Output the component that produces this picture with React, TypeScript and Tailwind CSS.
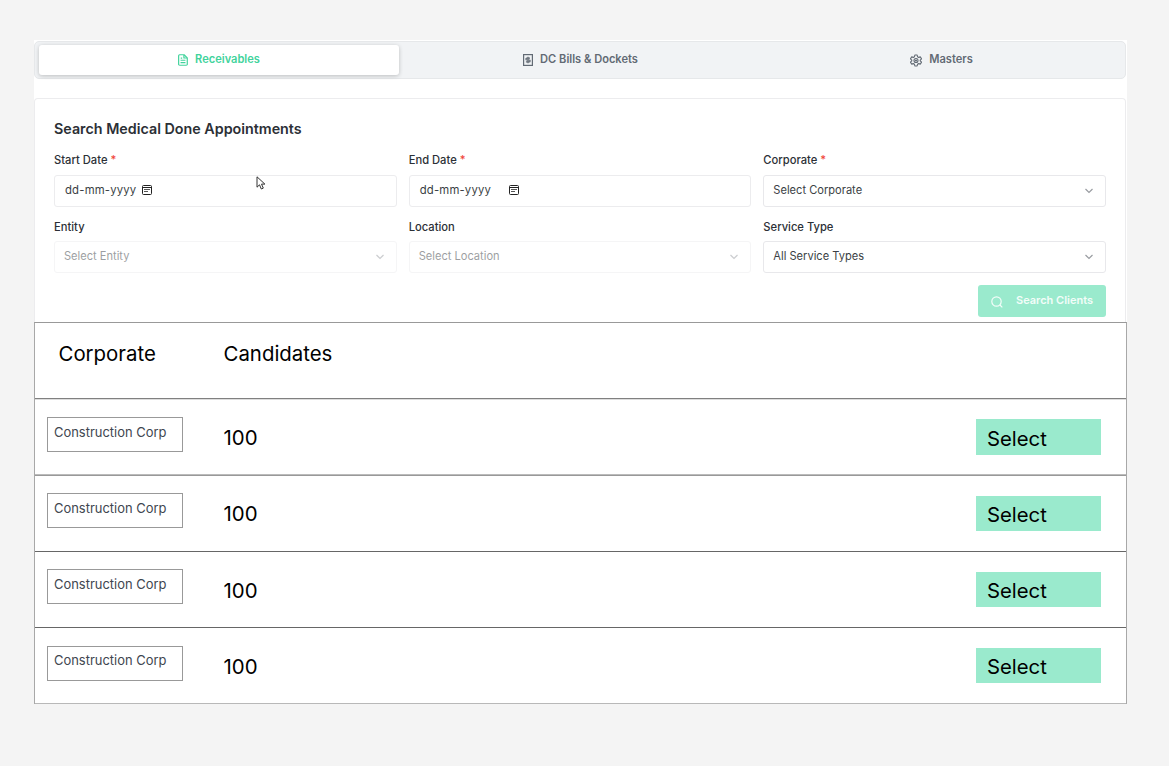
import type { ReactNode } from "react";

function FileIcon() {
  return (
    <svg width="10" height="12" viewBox="0 0 11 13" fill="none" stroke="currentColor" strokeWidth="1.3" strokeLinejoin="round">
      <path d="M1.8.7h4.9l3.500 3.400v7a1.200 1.200 0 0 1-1.200 1.200H1.900A1.200 1.200 0 0 1 .7 11.100V1.900A1.200 1.200 0 0 1 1.800.7z" />
      <path d="M6.500.9v3.400h3.500M3 4.400h1.600M2.800 6.800h5.400M2.800 9.300h5.400" />
    </svg>
  );
}

function BillIcon() {
  return (
    <svg width="10" height="12" viewBox="0 0 10 12" fill="none" stroke="currentColor">
      <rect x=".6" y=".6" width="8.800" height="10.800" strokeWidth="1.200" />
      <path d="M7 4.200H3.800a.9.9 0 0 0 0 1.800h2.400a.9.9 0 0 1 0 1.800H2.900M5 2.800v6.400" strokeWidth="1.200" />
    </svg>
  );
}

function GearIcon() {
  return (
    <svg width="12" height="13" viewBox="0 0 24 26" fill="none" stroke="currentColor" strokeWidth="2.200" strokeLinejoin="round">
      <path d="M9.700 2h4.600l.8 3.500 2.300 1.300 3.400-1 2.300 4-2.600 2.400v1.600l2.600 2.400-2.300 4-3.400-1-2.300 1.300-.8 3.500H9.700l-.8-3.500-2.300-1.300-3.400 1-2.300-4 2.600-2.400v-1.600L.9 9.800l2.300-4 3.400 1 2.300-1.300z" />
      <circle cx="12" cy="13" r="4" />
      <circle cx="12" cy="13" r="1" />
    </svg>
  );
}

function CalendarIcon() {
  return (
    <svg width="10" height="10" viewBox="0 0 10 10" fill="none" stroke="#222" strokeWidth="1">
      <rect x=".5" y=".5" width="9" height="9" rx="1" />
      <path d="M.5 2.500h9" />
      <path d="M2 4.500h6M2 6.500h4" stroke="#555" />
    </svg>
  );
}

function Chevron() {
  return (
    <svg width="8" height="6" viewBox="0 0 8 6" fill="none" stroke="#999ca1" strokeWidth="1.200">
      <path d="M.5 1 4 4.500 7.500 1" />
    </svg>
  );
}

function Tab({ icon, label, active, last }: { icon: ReactNode; label: string; active?: boolean; last?: boolean }) {
  const tone = active
    ? "w-[360px] rounded-[3px] bg-white text-[#41d39c] shadow-[0_1px_4px_rgba(0,0,0,0.22)]"
    : last
      ? "w-[359px] text-[#626a74]"
      : "w-[363px] text-[#626a74]";
  return (
    <div className={`flex h-[30px] items-center justify-center gap-[7px] ${tone}`}>
      <span className="*:block">{icon}</span>
      <span className="pb-px text-[11.1px] leading-[15px] font-semibold">{label}</span>
    </div>
  );
}

function Field({
  label,
  required,
  lower,
  children,
}: {
  label: string;
  required?: boolean;
  lower?: boolean;
  children: ReactNode;
}) {
  return (
    <div className="flex min-w-0 flex-col">
      <div
        className={`flex h-[15px] gap-[3px] text-[11.2px] leading-[15px] font-medium text-[#2c3036] ${lower ? "pt-px" : ""}`}
      >
        {label}
        {required && <span className="text-[#f04438]">*</span>}
      </div>
      {children}
    </div>
  );
}

function DateInput({ wide }: { wide?: boolean }) {
  return (
    <div className="mt-[7px] flex h-8 items-center rounded-[3px] border border-[#ececee] pl-[10px] text-[11.3px] text-[#3b3f45]">
      <span className="w-[71px] pb-[2px] tracking-[0.2px] whitespace-nowrap">dd-mm-yyyy</span>
      <span className={wide ? "-mt-[2px] ml-[18px] *:block" : "-mt-[2px] ml-[6px] *:block"}>
        <CalendarIcon />
      </span>
    </div>
  );
}

function SelectInput({ value, disabled }: { value: string; disabled?: boolean }) {
  return (
    <div
      className={
        disabled
          ? "mt-[7px] flex h-8 items-center justify-between rounded-[3px] border border-[#ececee] pr-3 pl-[9px] text-[11.1px] text-[#3b3f45] opacity-50"
          : "mt-[7px] flex h-8 items-center justify-between rounded-[3px] border border-[#e8e8eb] pr-3 pl-[9px] text-[11.1px] text-[#3b3f45]"
      }
    >
      <span className="pb-px">{value}</span>
      <Chevron />
    </div>
  );
}

const rows = [
  {
    corporate: "Construction Corp",
    candidates: 100,
    row: "h-[77px] border-[#999999] shadow-[inset_0_-1px_0_#bbbbbb]",
    box: "mt-[18px] pt-[5px]",
    count: "mt-[25px]",
    action: "mt-[20px] h-9 pt-[3px]",
  },
  {
    corporate: "Construction Corp",
    candidates: 100,
    row: "h-[76px] border-[#666666]",
    box: "mt-[17px] pt-[5px]",
    count: "mt-[24px]",
    action: "mt-[20px] h-[35px] pt-[3px]",
  },
  {
    corporate: "Construction Corp",
    candidates: 100,
    row: "h-[76px] border-[#666666]",
    box: "mt-[17px] pt-[5px]",
    count: "mt-[25px]",
    action: "mt-[20px] h-[35px] pt-[3px]",
  },
  {
    corporate: "Construction Corp",
    candidates: 100,
    row: "h-[76px] border-[#b8b8b8]",
    box: "mt-[18px] pt-[4px]",
    count: "mt-[25px]",
    action: "mt-[20px] h-[35px] pt-[3px]",
  },
];

export default function App() {
  return (
    <div className="min-h-[766px] bg-[#f4f4f4] pt-10 pl-[34px] font-['Inter',sans-serif]">
      <main className="h-[664px] w-[1093px] bg-white">
        <div className="h-[58px] pt-px">
          <nav className="flex h-[38px] w-[1092px] rounded-[5px] border border-[#e6e8ea] bg-[#f1f3f5] pt-[3px] pl-1">
            <Tab icon={<FileIcon />} label="Receivables" active />
            <Tab icon={<BillIcon />} label="DC Bills & Dockets" />
            <Tab icon={<GearIcon />} label="Masters" last />
          </nav>
        </div>

        <section className="h-[224px] w-[1092px] rounded-t-[4px] border border-b-0 border-[#ececee] px-[19px]">
          <h1 className="mt-5 h-5 text-[14.300px] leading-5 font-semibold text-[#2c3036]">
            Search Medical Done Appointments
          </h1>
          <div className="mt-[14px] grid grid-cols-3 gap-x-3 gap-y-3">
            <Field label="Start Date" required>
              <DateInput />
            </Field>
            <Field label="End Date" required>
              <DateInput wide />
            </Field>
            <Field label="Corporate" required>
              <SelectInput value="Select Corporate" />
            </Field>
            <Field label="Entity" lower>
              <SelectInput value="Select Entity" disabled />
            </Field>
            <Field label="Location" lower>
              <SelectInput value="Select Location" disabled />
            </Field>
            <Field label="Service Type" lower>
              <SelectInput value="All Service Types" />
            </Field>
          </div>
          <div className="mt-3 flex justify-end">
            <button className="flex h-8 w-32 items-center rounded-[3px] bg-[#9aeacd] pl-[13px] text-[11px] font-semibold text-[#f3fdf9]">
              <svg className="mt-px" width="12" height="12" viewBox="0 0 12 12" fill="none" stroke="currentColor" strokeWidth="1.200">
                <circle cx="5.500" cy="5.500" r="4.700" />
                <path d="m9 9 2.300 2.300" />
              </svg>
              <span className="ml-[13px] pb-px">Search Clients</span>
            </button>
          </div>
        </section>

        <section className="h-[382px] border-x border-t border-x-[#a8a8a8] border-t-[#999999] text-black">
          <div className="flex h-[76px] border-b border-[#808080] pt-[17px] text-[20.400px] leading-7 shadow-[0_1px_0_#dddddd]">
            <span className="w-[165px] pl-[23.500px]">Corporate</span>
            <span className="pl-[23.500px]">Candidates</span>
          </div>
          {rows.map((row, i) => (
            <div key={i} className={`flex border-b pl-3 ${row.row}`}>
              <div className={`h-[35px] w-[136px] border border-[#999999] pl-[6px] text-[12.950px] leading-[18px] text-[#40464f] ${row.box}`}>
                {row.corporate}
              </div>
              <span className={`ml-[40.500px] text-[20.400px] leading-7 ${row.count}`}>{row.candidates}</span>
              <button className={`mr-[25px] ml-auto w-[125px] bg-[#9aeacd] pl-[11px] text-left text-[20.300px] leading-7 ${row.action}`}>
                Select
              </button>
            </div>
          ))}
        </section>
      </main>

      <svg className="absolute top-[176px] left-[256px]" width="10" height="14" viewBox="0 0 10 14" fill="white" stroke="#333" strokeWidth="1" strokeLinejoin="round">
        <path d="M1 .8v10.400l2.500-2.400 1.800 4.200 2-.9-1.800-4h3.400z" />
      </svg>
    </div>
  );
}
